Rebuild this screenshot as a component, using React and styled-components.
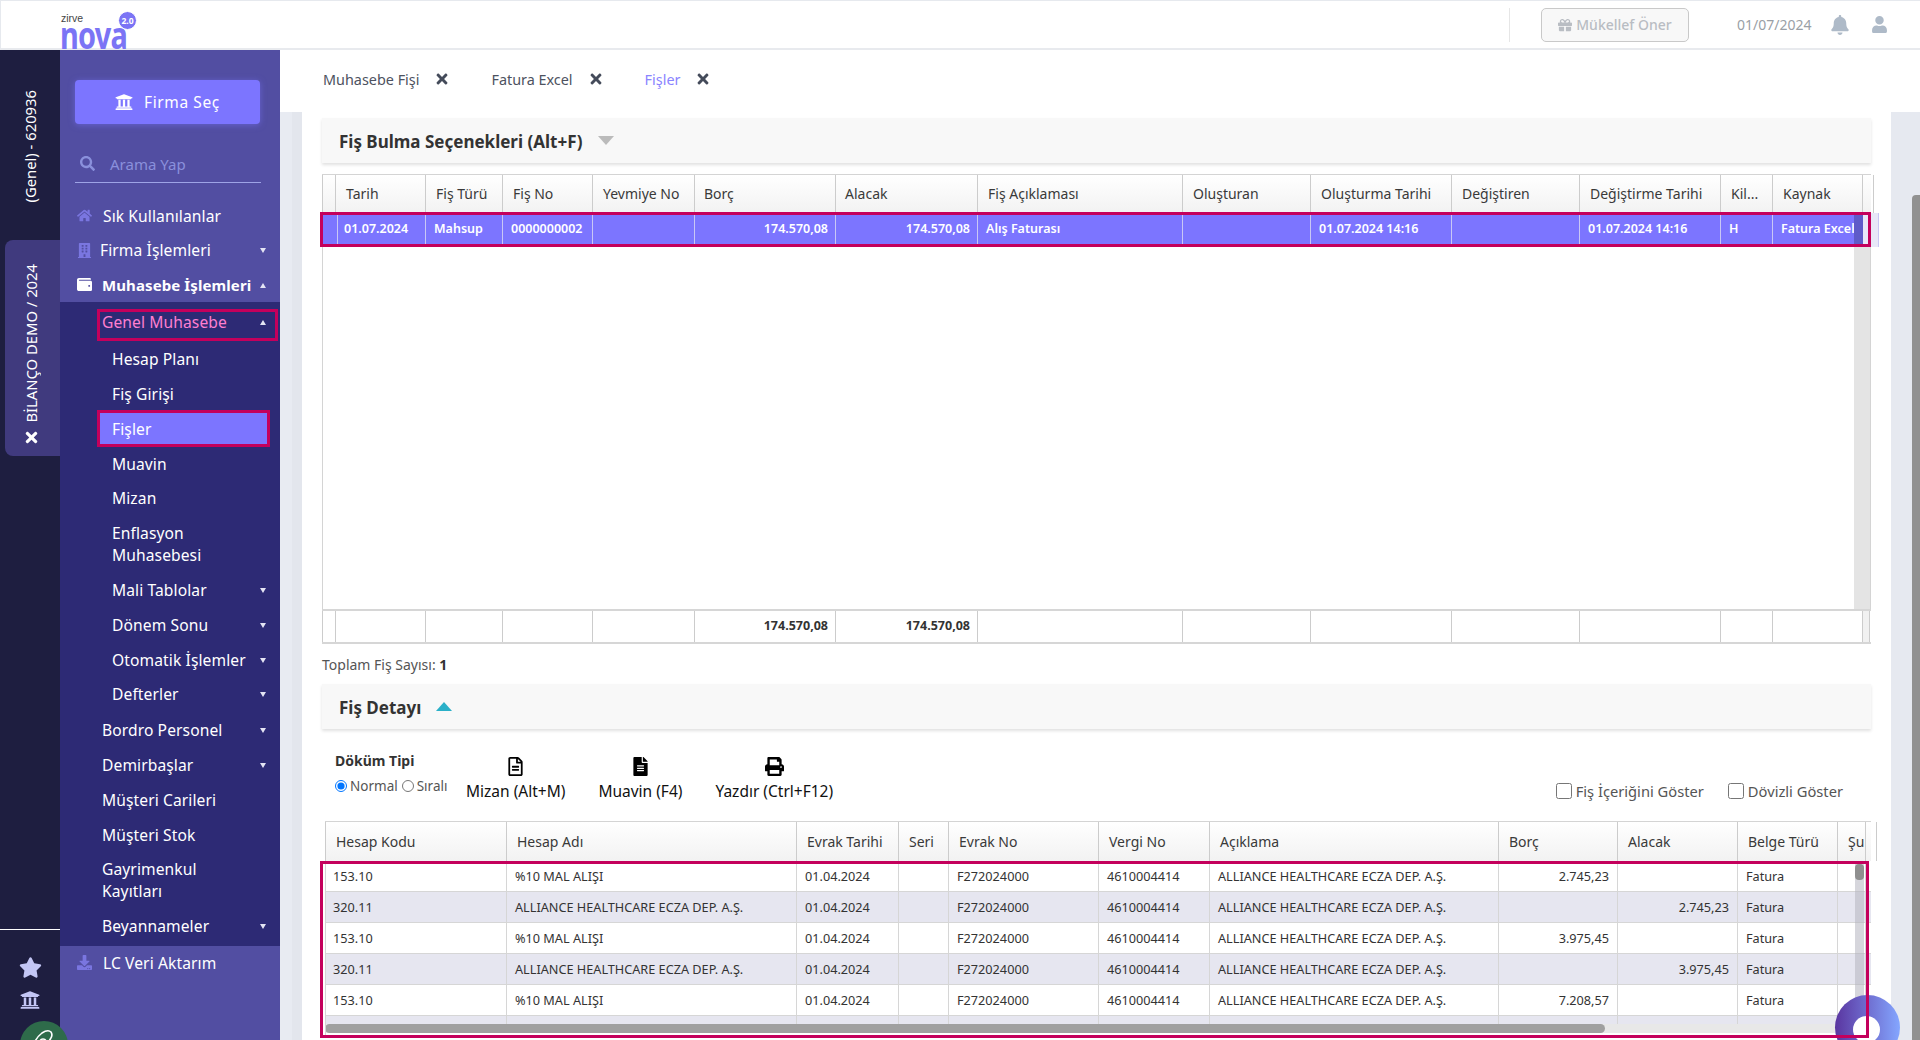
import React from 'react'
import styled, { createGlobalStyle } from 'styled-components'
import {
  FaUniversity, FaSearch, FaHome, FaBuilding, FaWallet, FaDownload, FaStar, FaGift,
  FaBell, FaUser, FaTimes, FaRegFileAlt, FaFileAlt, FaPrint
} from 'react-icons/fa'

const GlobalStyle = createGlobalStyle`
  html, body { margin: 0; padding: 0; height: 100%; }
  body { font-family: "Noto Sans", "Open Sans", sans-serif; background: #fff; overflow: hidden; }
  * { box-sizing: border-box; }
`

const MAGENTA = '#c4005c'
const PURPLE = '#7c75ff'

const menuTop = [
  { label: 'Sık Kullanılanlar', icon: <FaHome />, slot: 26 },
  { label: 'Firma İşlemleri', icon: <FaBuilding />, slot: 23, caret: 'down' },
  { label: 'Muhasebe İşlemleri', icon: <FaWallet />, slot: 25, caret: 'up', bold: true, white: true }
]

const subMenu = [
  { label: 'Hesap Planı' },
  { label: 'Fiş Girişi' },
  { label: 'Fişler', active: true },
  { label: 'Muavin' },
  { label: 'Mizan' },
  { label: 'Enflasyon Muhasebesi', wrap: true },
  { label: 'Mali Tablolar', caret: true },
  { label: 'Dönem Sonu', caret: true },
  { label: 'Otomatik İşlemler', caret: true },
  { label: 'Defterler', caret: true }
]

const groupMenu = [
  { label: 'Bordro Personel', caret: true },
  { label: 'Demirbaşlar', caret: true },
  { label: 'Müşteri Carileri' },
  { label: 'Müşteri Stok' },
  { label: 'Gayrimenkul Kayıtları', wrap: true },
  { label: 'Beyannameler', caret: true }
]

const FIS_COLS = '14px 90px 77px 90px 102px 141px 142px 205px 128px 141px 128px 141px 52px 90px 7px'
const DETAY_COLS = '182px 290px 102px 50px 150px 111px 289px 119px 120px 100px 28px 5px'

const fisHead = ['', 'Tarih', 'Fiş Türü', 'Fiş No', 'Yevmiye No', 'Borç', 'Alacak', 'Fiş Açıklaması', 'Oluşturan', 'Oluşturma Tarihi', 'Değiştiren', 'Değiştirme Tarihi', 'Kil...', 'Kaynak', '']
const fisRow = ['', '01.07.2024', 'Mahsup', '0000000002', '', '174.570,08', '174.570,08', 'Alış Faturası', '', '01.07.2024 14:16', '', '01.07.2024 14:16', 'H', 'Fatura Excel', '']
const fisFoot = ['', '', '', '', '', '174.570,08', '174.570,08', '', '', '', '', '', '', '', '']
const FIS_RIGHT = [5, 6]

const detayHead = ['Hesap Kodu', 'Hesap Adı', 'Evrak Tarihi', 'Seri', 'Evrak No', 'Vergi No', 'Açıklama', 'Borç', 'Alacak', 'Belge Türü', 'Şu', '']
const ALLIANCE = 'ALLIANCE HEALTHCARE ECZA DEP. A.Ş.'
const detayRows = [
  ['153.10', '%10 MAL ALIŞI', '2.745,23', ''],
  ['320.11', ALLIANCE, '', '2.745,23'],
  ['153.10', '%10 MAL ALIŞI', '3.975,45', ''],
  ['320.11', ALLIANCE, '', '3.975,45'],
  ['153.10', '%10 MAL ALIŞI', '7.208,57', '']
]

const App = () => (
  <Page>
    <GlobalStyle />
    <TopBar>
      <Logo>
        <LogoSmall>zirve</LogoSmall>
        <LogoBig>nova</LogoBig>
        <LogoBadge>2.0</LogoBadge>
      </Logo>
      <TopRight>
        <TopDivider />
        <SuggestButton><FaGift /> Mükellef Öner</SuggestButton>
        <TopDate>01/07/2024</TopDate>
        <TopIcon $size={20}><FaBell /></TopIcon>
        <TopIcon $size={17}><FaUser /></TopIcon>
      </TopRight>
    </TopBar>

    <Body>
      <Rail>
        <RailHead><RailText>(Genel) - 620936</RailText></RailHead>
        <RailTab>
          <RailText>BİLANÇO DEMO / 2024</RailText>
          <RailClose><FaTimes /></RailClose>
        </RailTab>
        <RailBottom>
          <RailIcon $size={23}><FaStar /></RailIcon>
          <RailIcon $size={20}><FaUniversity /></RailIcon>
          <RailAvatar>
            <svg width='28' height='28' viewBox='0 0 28 28' fill='none' stroke='#fff' strokeWidth='1.6'>
              <path d='M4 24c-1-7 3-12 8-16 3-2 7-3 9-1 2 3 0 7-3 10' />
              <circle cx='13' cy='17' r='3' />
            </svg>
          </RailAvatar>
        </RailBottom>
      </Rail>

      <Sidebar>
        <FirmButton><FaUniversity /> Firma Seç</FirmButton>
        <SearchBox>
          <SearchIcon><FaSearch /></SearchIcon>
          <SearchText>Arama Yap</SearchText>
        </SearchBox>
        <nav>
          {menuTop.map(m => (
            <TopItem key={m.label} $bold={m.bold}>
              <IconSlot $w={m.slot} $white={m.white}>{m.icon}</IconSlot>
              {m.label}
              {m.caret && <Caret $up={m.caret === 'up'} />}
            </TopItem>
          ))}
        </nav>
        <SubPanel>
          <GroupItem $marked>
            <MarkedText>Genel Muhasebe</MarkedText>
            <Caret $up />
          </GroupItem>
          <LeafList>
            {subMenu.map(m => (
              <LeafItem key={m.label} $active={m.active}>
                <ItemLabel $wrap={m.wrap}>{m.label}</ItemLabel>
                {m.caret && <Caret />}
              </LeafItem>
            ))}
          </LeafList>
          <GroupList>
            {groupMenu.map(m => (
              <GroupItem key={m.label}>
                <ItemLabel $wrap={m.wrap}>{m.label}</ItemLabel>
                {m.caret && <Caret />}
              </GroupItem>
            ))}
          </GroupList>
        </SubPanel>
        <TopItem $last>
          <IconSlot $w={26}><FaDownload /></IconSlot>
          LC Veri Aktarım
        </TopItem>
      </Sidebar>

      <Main>
        <Tabs>
          <Tab>Muhasebe Fişi<TabClose><FaTimes /></TabClose></Tab>
          <Tab>Fatura Excel<TabClose><FaTimes /></TabClose></Tab>
          <Tab $active>Fişler<TabClose><FaTimes /></TabClose></Tab>
        </Tabs>
        <ContentRow>
          <Gutter />
          <Panel>
            <SectionHead>
              Fiş Bulma Seçenekleri (Alt+F)
              <SectionCaret />
            </SectionHead>

            <FisTable>
              <HeadRow $cols={FIS_COLS}>
                {fisHead.map((h, i) => <HeadCell key={i} $pad={i === 5 || i === 6 ? 9 : 10}>{h}</HeadCell>)}
              </HeadRow>
              <FisBody>
                <FisStrip />
                <SelectedRow $cols={FIS_COLS}>
                  {fisRow.map((c, i) => <SelectedCell key={i} $right={FIS_RIGHT.includes(i)} $edge={i === 14}>{c}</SelectedCell>)}
                  <RowThumb />
                </SelectedRow>
              </FisBody>
              <FootRow $cols={FIS_COLS}>
                {fisFoot.map((c, i) => <FootCell key={i}>{c}</FootCell>)}
              </FootRow>
            </FisTable>

            <TotalLine>Toplam Fiş Sayısı: <b>1</b></TotalLine>

            <SectionHead>
              Fiş Detayı
              <SectionCaret $up />
            </SectionHead>

            <Toolbar>
              <DumpBox>
                <DumpTitle>Döküm Tipi</DumpTitle>
                <RadioRow>
                  <Radio type='radio' name='dokum' defaultChecked />
                  <RadioLabel>Normal</RadioLabel>
                  <Radio type='radio' name='dokum' />
                  <RadioLabel>Sıralı</RadioLabel>
                </RadioRow>
              </DumpBox>
              <Action><FaRegFileAlt />Mizan (Alt+M)</Action>
              <Action><FaFileAlt />Muavin (F4)</Action>
              <Action><FaPrint />Yazdır (Ctrl+F12)</Action>
              <Checks>
                <CheckLabel><input type='checkbox' />Fiş İçeriğini Göster</CheckLabel>
                <CheckLabel><input type='checkbox' />Dövizli Göster</CheckLabel>
              </Checks>
            </Toolbar>

            <DetayTable>
              <DetayHeadRow $cols={DETAY_COLS}>
                {detayHead.map((h, i) => <HeadCell key={i} $pad={10}>{h}</HeadCell>)}
              </DetayHeadRow>
              <DetayBody>
                <RowsClip>
                  {detayRows.map((r, i) => (
                    <DetayRow key={i} $cols={DETAY_COLS} $alt={i % 2 === 1}>
                      <DetayCell>{r[0]}</DetayCell>
                      <DetayCell>{r[1]}</DetayCell>
                      <DetayCell>01.04.2024</DetayCell>
                      <DetayCell />
                      <DetayCell><EvrakNo>F272024000</EvrakNo></DetayCell>
                      <DetayCell>4610004414</DetayCell>
                      <DetayCell>{ALLIANCE}</DetayCell>
                      <DetayCell $right>{r[2]}</DetayCell>
                      <DetayCell $right>{r[3]}</DetayCell>
                      <DetayCell>Fatura</DetayCell>
                      <DetayCell />
                      <DetayCell />
                    </DetayRow>
                  ))}
                  <DetayRow $cols={DETAY_COLS} $alt>
                    {detayHead.map((h, i) => <DetayCell key={i} />)}
                  </DetayRow>
                  <VTrack><VThumb /></VTrack>
                  <HBar><HTrack><HThumb /></HTrack></HBar>
                </RowsClip>
                <MarkBox />
              </DetayBody>
            </DetayTable>
          </Panel>
          <PageTrack><PageThumb /></PageTrack>
        </ContentRow>
      </Main>
    </Body>

    <ChatWidget><ChatHole /></ChatWidget>
  </Page>
)

const Page = styled.div`
  position: relative;
  width: 1920px;
  height: 1040px;
  overflow: hidden;
  display: flex;
  flex-direction: column;
  color: #333;
`

const TopBar = styled.header`
  height: 50px;
  flex: none;
  display: flex;
  align-items: center;
  justify-content: space-between;
  background: #fff;
  border-top: 1px solid #e6e9ee;
  border-left: 1px solid #e6e9ee;
  border-bottom: 2px solid #e8eaee;
`

const Logo = styled.div`
  position: relative;
  margin-left: 60px;
  width: 76px;
  height: 36px;
  align-self: flex-start;
  margin-top: 10px;
`

const LogoSmall = styled.div`
  position: absolute;
  left: 0;
  top: 2px;
  font-family: "Liberation Sans", sans-serif;
  font-size: 10.5px;
  line-height: 11px;
  color: #444;
`

const LogoBig = styled.div`
  position: absolute;
  left: -1px;
  top: 13px;
  font-family: "Noto Sans", sans-serif;
  font-size: 38px;
  font-weight: 700;
  line-height: 20px;
  letter-spacing: -1px;
  color: #7b74f5;
  transform: scaleX(0.76);
  transform-origin: left top;
`

const LogoBadge = styled.div`
  position: absolute;
  left: 57px;
  top: 0;
  width: 19px;
  height: 19px;
  border-radius: 50%;
  background: #7b74f5;
  border: 1px solid #fff;
  color: #fff;
  font-size: 8.5px;
  font-weight: 700;
  line-height: 17px;
  text-align: center;
`

const TopRight = styled.div`
  display: flex;
  align-items: center;
  height: 100%;
`

const TopDivider = styled.div`
  width: 1px;
  height: 34px;
  background: #e6e6e6;
  margin-right: 31px;
`

const SuggestButton = styled.div`
  width: 148px;
  height: 34px;
  display: flex;
  align-items: center;
  justify-content: center;
  gap: 4px;
  background: #f8f8f8;
  border: 1px solid #c9c9c9;
  border-radius: 5px;
  color: #b9bdc3;
  font-size: 14px;
  font-weight: 500;
  margin-right: 48px;
`

const TopDate = styled.div`
  font-size: 14px;
  color: #9a9fa6;
  width: 93px;
`

const TopIcon = styled.div`
  width: ${p => p.$size}px;
  font-size: ${p => p.$size}px;
  color: #aebac8;
  display: flex;
  margin-right: 21px;
  &:last-child { margin-right: 32px; }
`

const Body = styled.div`
  flex: 1;
  display: flex;
  min-height: 0;
`

const Rail = styled.aside`
  position: relative;
  z-index: 2;
  width: 60px;
  flex: none;
  display: flex;
  flex-direction: column;
  background: #1e1e40;
  color: #fff;
`

const RailHead = styled.div`
  height: 190px;
  padding-top: 2px;
  display: flex;
  align-items: center;
  justify-content: center;
`

const RailText = styled.div`
  writing-mode: vertical-rl;
  transform: rotate(180deg);
  font-size: 14.8px;
  line-height: 20px;
  white-space: nowrap;
`

const RailTab = styled.div`
  height: 216px;
  margin-left: 5px;
  padding: 0 3px 10px 0;
  display: flex;
  flex-direction: column;
  align-items: center;
  justify-content: flex-end;
  gap: 6px;
  background: #403a7e;
  border-radius: 8px 0 0 8px;
`

const RailClose = styled.div`
  font-size: 17px;
  line-height: 0;
  display: flex;
`

const RailBottom = styled.div`
  position: relative;
  margin-top: auto;
  height: 111px;
  border-top: 1px solid #fff;
  padding-top: 26px;
  display: flex;
  flex-direction: column;
  align-items: center;
  gap: 11px;
  color: #c3c6f5;
`

const RailIcon = styled.div`
  font-size: ${p => p.$size}px;
  display: flex;
`

const RailAvatar = styled.div`
  position: absolute;
  left: 20px;
  top: 91px;
  width: 48px;
  height: 48px;
  border-radius: 50%;
  background: #2e6b4a;
  padding: 4px 0 0 10px;
`

const Sidebar = styled.aside`
  width: 220px;
  flex: none;
  display: flex;
  flex-direction: column;
  background: #524ea2;
  color: #fff;
  padding-top: 30px;
`

const FirmButton = styled.div`
  margin: 0 20px 0 15px;
  height: 44px;
  display: flex;
  align-items: center;
  justify-content: center;
  gap: 11px;
  background: ${PURPLE};
  border-radius: 4px;
  box-shadow: 0 1px 6px rgba(124, 117, 255, 0.5);
  font-size: 15.5px;
  letter-spacing: 0.6px;
  svg { font-size: 18px; }
`

const SearchBox = styled.div`
  margin: 21px 19px 0 15px;
  height: 38px;
  display: flex;
  align-items: center;
  border-bottom: 1px solid #9ea3e6;
`

const SearchIcon = styled.div`
  margin-left: 5px;
  width: 30px;
  font-size: 15px;
  display: flex;
  color: #8a90dc;
`

const SearchText = styled.div`
  font-size: 15px;
  color: #8a90dc;
`

const TopItem = styled.div`
  height: 34.5px;
  display: flex;
  align-items: center;
  padding-left: 17px;
  font-size: ${p => (p.$bold ? '15px' : '15.6px')};
  font-weight: ${p => (p.$bold ? 700 : 400)};
  letter-spacing: 0.1px;
  position: relative;
  &:first-child { margin-top: 15.5px; }
`

const IconSlot = styled.span`
  width: ${p => p.$w}px;
  flex: none;
  display: flex;
  font-size: 15px;
  color: ${p => (p.$white ? '#fff' : '#7a76e0')};
`

const Caret = styled.i`
  position: absolute;
  right: 14px;
  top: 50%;
  margin-top: -2px;
  width: 0;
  height: 0;
  border-left: 3.5px solid transparent;
  border-right: 3.5px solid transparent;
  ${p => (p.$up ? 'border-bottom: 5px solid #e4e4f4;' : 'border-top: 5px solid #e4e4f4;')}
`

const SubPanel = styled.div`
  background: #2d2a75;
  padding-top: 3px;
  padding-bottom: 2px;
`

const GroupItem = styled.div`
  position: relative;
  min-height: 34.8px;
  display: flex;
  align-items: center;
  padding: 6.4px 20px 6.4px 42px;
  font-size: 15.6px;
  line-height: 22px;
  letter-spacing: 0.1px;
  ${p =>
    p.$marked &&
    `&::after {
      content: '';
      position: absolute;
      left: 37px;
      right: 2px;
      top: 4px;
      bottom: -1px;
      border: 3px solid ${MAGENTA};
    }`}
`

const MarkedText = styled.span`
  color: #ff7fd0;
`

const ItemLabel = styled.span`
  ${p => p.$wrap && 'width: 120px;'}
`

const LeafList = styled.div`
  padding-top: 2px;
`

const LeafItem = styled.div`
  position: relative;
  min-height: ${p => (p.$active ? '36.8px' : '34.8px')};
  display: flex;
  align-items: center;
  font-size: 15.6px;
  line-height: 22px;
  letter-spacing: 0.1px;
  padding: 6.4px 24px 6.4px 52px;
  ${p =>
    p.$active &&
    `background: ${PURPLE};
     outline: 3px solid ${MAGENTA};
     outline-offset: -3px;
     margin: -1px 10px -1px 37px;
     padding: 6.4px 4px 6.4px 15px;`}
`

const GroupList = styled.div`
  padding-top: 1px;
`

const Main = styled.main`
  flex: 1;
  min-width: 0;
  display: flex;
  flex-direction: column;
  background: #fff;
`

const Tabs = styled.div`
  height: 62px;
  flex: none;
  display: flex;
  padding: 19px 0 0 43px;
  gap: 41px;
`

const Tab = styled.div`
  display: flex;
  height: 20px;
  align-items: center;
  font-size: 14.4px;
  color: ${p => (p.$active ? '#8a84ff' : '#4d5260')};
`

const TabClose = styled.span`
  margin-left: 15px;
  display: flex;
  font-size: 16px;
  color: #444b5a;
`

const ContentRow = styled.div`
  flex: 1;
  display: flex;
  min-height: 0;
`

const Gutter = styled.div`
  width: 22px;
  flex: none;
  background: linear-gradient(to right, #e8ebf2 0 12px, #e3e6ed 12px);
`

const Panel = styled.div`
  flex: 1;
  min-width: 0;
  padding: 6px 20px 0;
  background: #fff;
  display: flex;
  flex-direction: column;
`

const PageTrack = styled.div`
  width: 29px;
  flex: none;
  background: #e6e9f0;
  padding: 83px 0 0 21px;
`

const PageThumb = styled.div`
  height: 100%;
  background: #919191;
  border-radius: 4px 0 0 0;
`

const SectionHead = styled.div`
  flex: none;
  height: 45px;
  display: flex;
  align-items: center;
  padding: 2px 0 0 17px;
  background: #f8f8f8;
  box-shadow: 0 2px 3px rgba(0, 0, 0, 0.12);
  font-size: 17px;
  font-weight: 700;
  color: #333;
`

const SectionCaret = styled.i`
  margin: -2px 0 0 15px;
  width: 0;
  height: 0;
  border-left: 8px solid transparent;
  border-right: 8px solid transparent;
  ${p => (p.$up ? 'border-bottom: 9px solid #2ab0c8;' : 'border-top: 9px solid #bbb;')}
`

const FisTable = styled.div`
  margin-top: 11px;
  height: 470px;
  flex: none;
  display: flex;
  flex-direction: column;
  border-bottom: 2px solid #d6d6d6;
`

const TableRow = styled.div`
  display: grid;
  grid-template-columns: ${p => p.$cols};
`

const HeadRow = styled(TableRow)`
  height: 39px;
  flex: none;
  border-top: 1px solid #d4d4d4;
  background: linear-gradient(to bottom, #fff, #f2f2f2);
`

const HeadCell = styled.div`
  display: flex;
  align-items: center;
  padding-left: ${p => p.$pad}px;
  padding-bottom: 2px;
  border-right: 1px solid #ccc;
  font-size: 14px;
  color: #3a3a3a;
  white-space: nowrap;
  overflow: hidden;
  &:first-child { border-left: 1px solid #ccc; }
`

const FisBody = styled.div`
  position: relative;
  flex: 1;
  border-left: 1px solid #d4d4d4;
  border-right: 1px solid #d4d4d4;
`

const FisStrip = styled.div`
  position: absolute;
  right: 0;
  top: 0;
  bottom: 0;
  width: 16px;
  background: #e4e4e4;
`

const SelectedRow = styled(TableRow)`
  position: relative;
  height: 34px;
  margin: 0 -1px;
  background: ${PURPLE};
  &::after {
    content: '';
    position: absolute;
    left: -2px;
    right: 0;
    top: -1px;
    bottom: 0;
    border: 3px solid ${MAGENTA};
  }
`

const SelectedCell = styled.div`
  display: flex;
  align-items: center;
  justify-content: ${p => (p.$right ? 'flex-end' : 'flex-start')};
  padding: 0 7px 3px 8px;
  border-right: 1px solid #c9c7f5;
  font-size: 12.5px;
  font-weight: 600;
  color: #fff;
  white-space: nowrap;
  overflow: hidden;
  background: ${p => (p.$edge ? '#e8e8f8' : 'transparent')};
`

const RowThumb = styled.div`
  position: absolute;
  right: 8px;
  top: 0;
  bottom: 0;
  width: 9px;
  background: #5f5bc8;
`

const FootRow = styled(TableRow)`
  height: 33px;
  flex: none;
  border-top: 2px solid #d6d6d6;
`

const FootCell = styled.div`
  display: flex;
  align-items: center;
  justify-content: flex-end;
  padding: 0 7px 2px 0;
  border-right: 1px solid #ccc;
  font-size: 12.5px;
  font-weight: 700;
  color: #333;
  &:first-child { border-left: 1px solid #ccc; }
  &:last-child { background: #f1f1f1; padding: 0; }
`

const TotalLine = styled.div`
  flex: none;
  height: 40px;
  padding-top: 13px;
  font-size: 14px;
  line-height: 20px;
  color: #555;
  margin-top: -2px;
  margin-bottom: 2px;
  b { color: #333; }
`

const Toolbar = styled.div`
  flex: none;
  height: 92px;
  display: flex;
  align-items: flex-start;
  padding: 22px 28px 0 13px;
`

const DumpBox = styled.div`
  width: 131px;
  flex: none;
`

const DumpTitle = styled.div`
  font-size: 14px;
  font-weight: 700;
  line-height: 20px;
  color: #333;
`

const RadioRow = styled.div`
  margin-top: 5px;
  height: 20px;
  display: flex;
  align-items: center;
`

const Radio = styled.input`
  margin: 0 3px 0 0;
  width: 12px;
  height: 12px;
  flex: none;
`

const RadioLabel = styled.label`
  font-size: 13.5px;
  color: #555;
  margin-right: 4px;
`

const Action = styled.div`
  margin-top: 6px;
  margin-right: 33px;
  display: flex;
  flex-direction: column;
  align-items: center;
  gap: 5px;
  font-size: 15.5px;
  line-height: 20px;
  color: #111;
  svg { font-size: 19px; color: #000; }
`

const Checks = styled.div`
  margin: 30px 0 0 auto;
  display: flex;
  gap: 24px;
`

const CheckLabel = styled.label`
  display: flex;
  align-items: center;
  gap: 4px;
  height: 20px;
  font-size: 14.7px;
  color: #555;
  input { width: 16px; height: 16px; margin: 0; }
`

const DetayTable = styled.div`
  margin-left: 3px;
  flex: none;
`

const DetayHeadRow = styled(HeadRow)`
  height: 40px;
  & > div { padding-bottom: 0; }
`

const DetayBody = styled.div`
  position: relative;
  height: 177px;
`

const RowsClip = styled.div`
  position: relative;
  height: 100%;
  overflow: hidden;
  border-left: 1px solid #d4d4d4;
`

const DetayRow = styled(TableRow)`
  height: 31px;
  margin-left: -1px;
  border-bottom: 1px solid #d6d6d6;
  background: ${p => (p.$alt ? '#e6e6f0' : '#fff')};
`

const DetayCell = styled.div`
  display: flex;
  align-items: center;
  justify-content: ${p => (p.$right ? 'flex-end' : 'flex-start')};
  padding: 0 8px;
  border-right: 1px solid #d6d6d6;
  font-size: 12.7px;
  color: #333;
  white-space: nowrap;
  overflow: hidden;
`

const EvrakNo = styled.span`
  display: block;
  width: 72px;
  overflow: hidden;
`

const VTrack = styled.div`
  position: absolute;
  right: 7px;
  top: 3px;
  bottom: 14px;
  width: 9px;
  background: rgba(180, 180, 192, 0.55);
`

const VThumb = styled.div`
  height: 16px;
  background: #8f8f8f;
  border-radius: 4px;
`

const HBar = styled.div`
  position: absolute;
  left: -1px;
  right: 0;
  bottom: 0;
  height: 14px;
  background: #fff;
`

const HTrack = styled.div`
  height: 9px;
  margin-right: 16px;
  background: #e8e8e8;
`

const HThumb = styled.div`
  width: 1280px;
  height: 100%;
  background: #a0a0a0;
  border-radius: 5px;
`

const MarkBox = styled.div`
  position: absolute;
  z-index: 5;
  left: -5px;
  right: 2px;
  top: 0;
  bottom: 0;
  border: 3px solid ${MAGENTA};
  pointer-events: none;
`

const ChatWidget = styled.div`
  position: absolute;
  z-index: 4;
  left: 1835px;
  top: 995px;
  width: 65px;
  height: 65px;
  border-radius: 50%;
  background: linear-gradient(to right, #5a35a0, #84a6ff);
`

const ChatHole = styled.div`
  position: absolute;
  left: 18px;
  top: 21px;
  width: 27px;
  height: 27px;
  border-radius: 50%;
  background: #fff;
`

export default App
